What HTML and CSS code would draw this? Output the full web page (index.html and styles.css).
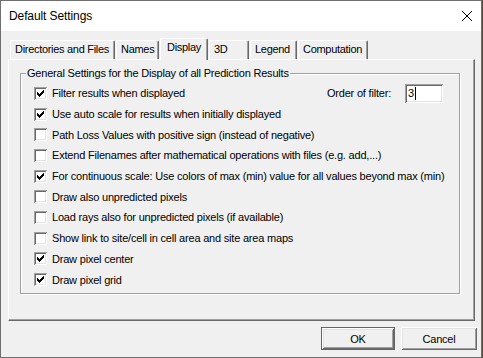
FILE: index.html
```html
<!DOCTYPE html>
<html>
<head>
    <meta charset="utf-8" />
    <title>Default Settings</title>
    <link rel="stylesheet" href="styles.css">
</head>
<body>
    <div id="Dialog">
        <div id="TitleBar">
            <span id="TitleText">Default Settings</span>
            <svg id="CloseBtn" width="10" height="10" viewBox="0 0 10 10">
                <path d="M0 0 L10 10 M10 0 L0 10" stroke="#000" stroke-width="1" fill="none" />
            </svg>
        </div>

        <div id="TabStrip">
            <div class="tab tab-dirs">Directories and Files</div>
            <div class="tab tab-names">Names</div>
            <div class="tab tab-display selected">Display</div>
            <div class="tab tab-3d">3D</div>
            <div class="tab tab-legend">Legend</div>
            <div class="tab tab-comp">Computation</div>
        </div>

        <div id="TabPanel">
            <div class="group">
                <div class="group-title">General Settings for the Display of all Prediction Results</div>

                <div class="row">
                    <span class="box checked"></span>
                    <span class="label">Filter results when displayed</span>
                    <span class="order-label">Order of filter:</span>
                    <div class="order-input">3<span class="caret"></span></div>
                </div>
                <div class="row">
                    <span class="box checked"></span>
                    <span class="label">Use auto scale for results when initially displayed</span>
                </div>
                <div class="row">
                    <span class="box"></span>
                    <span class="label">Path Loss Values with positive sign (instead of negative)</span>
                </div>
                <div class="row">
                    <span class="box"></span>
                    <span class="label">Extend Filenames after mathematical operations with files (e.g. add,...)</span>
                </div>
                <div class="row">
                    <span class="box checked"></span>
                    <span class="label">For continuous scale: Use colors of max (min) value for all values beyond max (min)</span>
                </div>
                <div class="row">
                    <span class="box"></span>
                    <span class="label">Draw also unpredicted pixels</span>
                </div>
                <div class="row">
                    <span class="box"></span>
                    <span class="label">Load rays also for unpredicted pixels (if available)</span>
                </div>
                <div class="row">
                    <span class="box"></span>
                    <span class="label">Show link to site/cell in cell area and site area maps</span>
                </div>
                <div class="row">
                    <span class="box checked"></span>
                    <span class="label">Draw pixel center</span>
                </div>
                <div class="row">
                    <span class="box checked"></span>
                    <span class="label">Draw pixel grid</span>
                </div>
            </div>
        </div>

        <div id="ButtonRow">
            <button class="btn btn-ok">OK</button>
            <button class="btn btn-cancel">Cancel</button>
        </div>
    </div>
</body>
</html>
```

FILE: styles.css
```css
html {
    background: #5e4632;
}
body {
    margin: 0;
    font-family: "Liberation Sans", Arial, sans-serif;
    font-size: 11px;
    letter-spacing: -0.2px;
    color: #000;
}

#Dialog {
    width: 482px;
    height: 358px;
    box-sizing: border-box;
    border: 1px solid #6f6f6f;
    background: #f0f0f0;
}

#TitleBar {
    display: flex;
    align-items: center;
    justify-content: space-between;
    height: 30px;
    padding: 0 9px 0 8px;
    background: #fff;
}
#TitleText {
    font-size: 12px;
    letter-spacing: -0.1px;
}

#TabStrip {
    display: flex;
    align-items: flex-end;
    gap: 1px;
    height: 21px;
    margin-top: 7px;
    padding-left: 9px;
}
.tab {
    box-sizing: border-box;
    height: 19px;
    line-height: 17px;
    padding-left: 4px;
    white-space: nowrap;
    letter-spacing: -0.3px;
    border-top: 1px solid #fff;
    border-left: 1px solid #fff;
    border-right: 1px solid #696969;
    border-radius: 2px 2px 0 0;
    box-shadow: inset -1px 0 #a0a0a0;
}
.tab.selected {
    position: relative;
    height: 22px;
    margin-bottom: -1px;
    padding-left: 6px;
    background: #f0f0f0;
}
.tab-dirs { width: 105px; }
.tab-names { width: 43px; }
.tab-display { width: 48px; }
.tab-3d { width: 40px; }
.tab-legend { width: 47px; }
.tab-comp { width: 70px; }

#TabPanel {
    box-sizing: border-box;
    width: 467px;
    height: 262px;
    margin-left: 7px;
    padding: 13px 0 0 11px;
    border-top: 1px solid #fff;
    border-left: 1px solid #fff;
    border-right: 1px solid #696969;
    border-bottom: 1px solid #696969;
    box-shadow: inset -1px -1px #a0a0a0;
}

.group {
    box-sizing: border-box;
    width: 440px;
    height: 221px;
    border: 1px solid #a0a0a0;
    box-shadow: 1px 1px #fff, inset 1px 1px #fff;
}
.group-title {
    width: fit-content;
    margin: -7px 0 0 5px;
    padding: 0 1px;
    line-height: 13px;
    background: #f0f0f0;
}
.group-title + .row {
    margin-top: 3px;
}

.row {
    display: flex;
    align-items: center;
    height: 20.7px;
    padding-left: 13px;
    white-space: nowrap;
}
.box {
    flex: none;
    width: 13px;
    height: 13px;
    margin-right: 5px;
    background: #fff;
    box-shadow: inset 1px 1px #a0a0a0, inset -1px -1px #fff, inset 2px 2px #696969, inset -2px -2px #e3e3e3;
}
.box.checked {
    background: #fff url("data:image/svg+xml,%3Csvg xmlns='http://www.w3.org/2000/svg' width='13' height='13' shape-rendering='crispEdges'%3E%3Cpath d='M3 5h1v1h1v1h1v-1h1v-1h1v-1h1v-1h1v3h-1v1h-1v1h-1v1h-1v1h-1v-1h-1v-1h-1z' fill='%23000'/%3E%3C/svg%3E") no-repeat;
}

.order-label {
    margin-left: auto;
    margin-right: 14px;
}
.order-input {
    display: flex;
    align-items: center;
    box-sizing: border-box;
    width: 38px;
    height: 19px;
    margin-right: 16px;
    padding-left: 3px;
    background: #fff;
    box-shadow: inset 1px 1px #a0a0a0, inset -1px -1px #fff, inset 2px 2px #696969, inset -2px -2px #e3e3e3;
}
.caret {
    width: 1px;
    height: 13px;
    margin-left: 1px;
    background: #000;
}

#ButtonRow {
    display: flex;
    justify-content: flex-end;
    gap: 6px;
    margin-top: 6px;
    padding-right: 4px;
}
.btn {
    box-sizing: border-box;
    height: 23px;
    padding: 0;
    border: none;
    font-family: inherit;
    font-size: 11px;
    letter-spacing: -0.2px;
    color: #000;
    background: #f0f0f0;
    box-shadow: inset 1px 1px #fff, inset -1px -1px #696969, inset 2px 2px #e3e3e3, inset -2px -2px #a0a0a0;
}
.btn-ok {
    width: 74px;
    border: 1px solid #646464;
}
.btn-cancel {
    width: 76px;
}
```
